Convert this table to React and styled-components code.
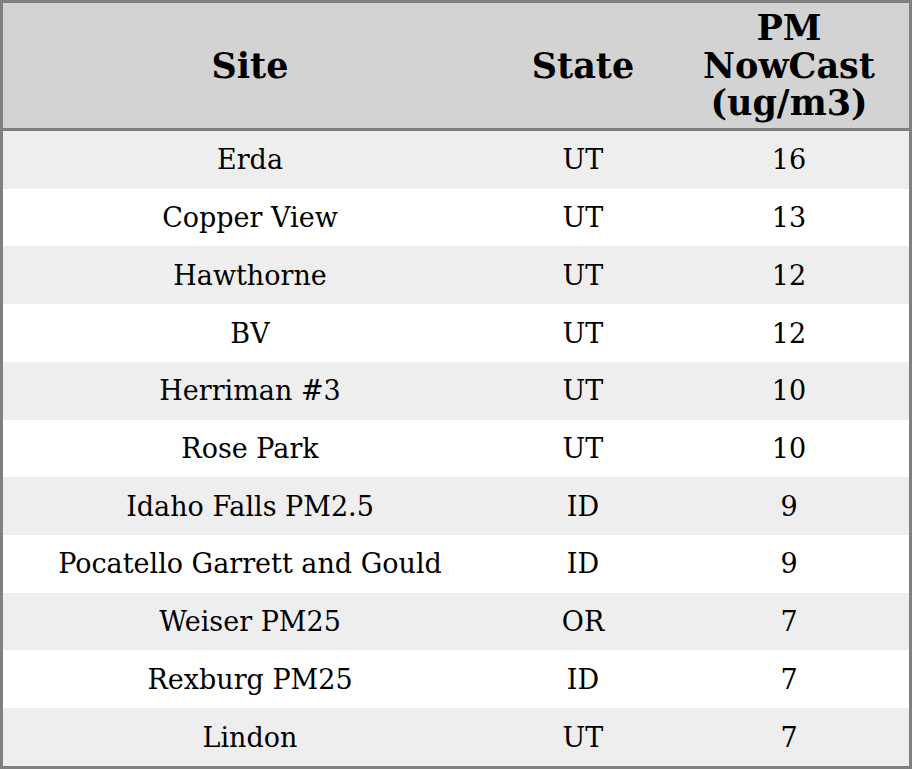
import React from "react";
import styled, { createGlobalStyle } from "styled-components";

const Global = createGlobalStyle`
  html, body { margin: 0; padding: 0; background: #fff; }
  body { font-family: "DejaVu Serif", serif; }
`;

const Table = styled.table`
  width: 912px;
  height: 769px;
  border: 3px solid #808080;
  border-spacing: 0;
  border-collapse: separate;
  table-layout: fixed;
  box-sizing: border-box;
  font-family: "DejaVu Serif", serif;
  color: #000;
`;

const HeadCell = styled.th`
  background: #d3d3d3;
  height: 125px;
  padding: 0 6px;
  border-bottom: 3px solid #808080;
  font-size: 35px;
  font-weight: bold;
  line-height: 37.5px;
  text-align: center;
  vertical-align: middle;
`;

const Row = styled.tr`
  background: ${(p) => (p.$odd ? "#eeeeee" : "#ffffff")};
`;

const Cell = styled.td`
  padding: 0;
  font-size: 27px;
  text-align: center;
  vertical-align: middle;
  white-space: nowrap;
`;

const data = [
  ["Erda", "UT", 16],
  ["Copper View", "UT", 13],
  ["Hawthorne", "UT", 12],
  ["BV", "UT", 12],
  ["Herriman #3", "UT", 10],
  ["Rose Park", "UT", 10],
  ["Idaho Falls PM2.5", "ID", 9],
  ["Pocatello Garrett and Gould", "ID", 9],
  ["Weiser PM25", "OR", 7],
  ["Rexburg PM25", "ID", 7],
  ["Lindon", "UT", 7],
];

export default function App() {
  return (
    <>
      <Global />
      <Table>
        <colgroup>
          <col style={{ width: 494 }} />
          <col style={{ width: 172 }} />
          <col style={{ width: 240 }} />
        </colgroup>
        <thead>
          <tr>
            <HeadCell>Site</HeadCell>
            <HeadCell>State</HeadCell>
            <HeadCell>
              PM
              <br />
              NowCast
              <br />
              (ug/m3)
            </HeadCell>
          </tr>
        </thead>
        <tbody>
          {data.map(([site, state, val], i) => (
            <Row key={site} $odd={i % 2 === 0}>
              <Cell>{site}</Cell>
              <Cell>{state}</Cell>
              <Cell>{val}</Cell>
            </Row>
          ))}
        </tbody>
      </Table>
    </>
  );
}
